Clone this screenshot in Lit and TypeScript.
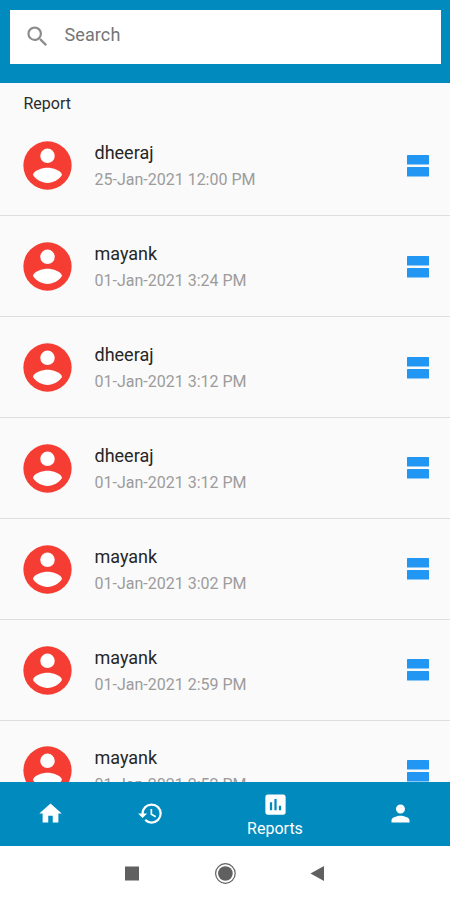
import { LitElement, html, css, svg } from "lit";
import { customElement } from "lit/decorators.js";

interface Report {
  name: string;
  date: string;
}

const REPORTS: Report[] = [
  { name: "dheeraj", date: "25-Jan-2021 12:00 PM" },
  { name: "mayank", date: "01-Jan-2021 3:24 PM" },
  { name: "dheeraj", date: "01-Jan-2021 3:12 PM" },
  { name: "dheeraj", date: "01-Jan-2021 3:12 PM" },
  { name: "mayank", date: "01-Jan-2021 3:02 PM" },
  { name: "mayank", date: "01-Jan-2021 2:59 PM" },
  { name: "mayank", date: "01-Jan-2021 2:52 PM" },
];

const ICONS = {
  search: svg`<path d="M15.5 14h-.79l-.28-.27A6.47 6.47 0 0 0 16 9.5 6.5 6.5 0 1 0 9.5 16c1.61 0 3.09-.59 4.23-1.57l.27.28v.79l5 4.99L20.49 19l-4.99-5zm-6 0C7.01 14 5 11.99 5 9.5S7.01 5 9.5 5 14 7.01 14 9.5 11.99 14 9.5 14z"/>`,
  home: svg`<path d="M10 20v-6h4v6h5v-8h3L12 3 2 12h3v8z"/>`,
  history: svg`<path d="M13 3a9 9 0 0 0-9 9H1l3.89 3.89.07.14L9 12H6c0-3.87 3.13-7 7-7s7 3.13 7 7-3.13 7-7 7c-1.93 0-3.68-.79-4.94-2.06l-1.42 1.42A8.954 8.954 0 0 0 13 21a9 9 0 0 0 0-18zm-1 5v5l4.28 2.54.72-1.21-3.5-2.08V8H12z"/>`,
  chart: svg`<path d="M19 3H5c-1.1 0-2 .9-2 2v14c0 1.1.9 2 2 2h14c1.1 0 2-.9 2-2V5c0-1.1-.9-2-2-2zM9 17H7v-7h2v7zm4 0h-2V7h2v10zm4 0h-2v-4h2v4z"/>`,
  person: svg`<path d="M12 12c2.21 0 4-1.79 4-4s-1.79-4-4-4-4 1.79-4 4 1.79 4 4 4zm0 2c-2.67 0-8 1.34-8 4v2h16v-2c0-2.66-5.33-4-8-4z"/>`,
};

@customElement("report-row")
export class ReportRow extends LitElement {
  static properties = { report: { attribute: false } };
  declare report: Report;

  static styles = css`
    :host {
      display: flex;
      align-items: center;
      box-sizing: border-box;
      flex: none;
      height: 100.85px;
      padding: 1px 21px 0 23px;
      border-bottom: 1.5px solid #dedede;
    }
    .avatar {
      width: 49px;
      height: 49px;
      flex: none;
    }
    .text {
      flex: 1;
      margin-left: 22.5px;
      padding-top: 1px;
    }
    .name {
      font-size: 18px;
      line-height: 24px;
      color: #262626;
    }
    .date {
      margin-top: 4px;
      font-size: 16px;
      line-height: 22px;
      color: #9c9c9c;
    }
    .agenda {
      width: 22px;
      height: 22px;
    }
  `;

  render() {
    return html`
      <svg class="avatar" viewBox="1.85 1.85 20.3 20.3">
        <circle cx="12" cy="12" r="10" fill="#f63d33" />
        <circle cx="12" cy="8" r="3" fill="#fff" />
        <path fill="#fff" d="M12 19.2c-2.5 0-4.71-1.28-6-3.22.03-1.99 4-3.08 6-3.08 1.99 0 5.97 1.09 6 3.08-1.29 1.94-3.5 3.22-6 3.22z" />
      </svg>
      <div class="text">
        <div class="name">${this.report.name}</div>
        <div class="date">${this.report.date}</div>
      </div>
      <svg class="agenda" viewBox="0 0 22 22" fill="#2196f3">
        <rect width="22" height="9.5" rx=".6" />
        <rect y="12" width="22" height="9.5" rx=".6" />
      </svg>
    `;
  }
}

@customElement("app-root")
export class AppRoot extends LitElement {
  static styles = css`
    :host {
      display: flex;
      flex-direction: column;
      width: 450px;
      height: 900px;
      overflow: hidden;
      background: #fafafa;
      font-family: Roboto, sans-serif;
    }
    .header {
      flex: none;
      box-sizing: border-box;
      height: 82.5px;
      padding: 9.5px 9px 0 9.5px;
      background: #008abe;
    }
    .search {
      display: flex;
      align-items: center;
      box-sizing: border-box;
      height: 54.5px;
      padding-left: 14px;
      background: #fff;
      color: #757575;
      font-size: 18px;
    }
    .search svg {
      width: 27px;
      height: 27px;
      fill: #8c8c8c;
    }
    .placeholder {
      margin: -5px 0 0 14px;
      letter-spacing: 0.1px;
    }
    .list {
      flex: 1;
      min-height: 0;
      overflow: hidden;
      display: flex;
      flex-direction: column;
    }
    .title {
      flex: none;
      box-sizing: border-box;
      height: 33px;
      padding: 11px 0 0 23.5px;
      font-size: 16px;
      line-height: 20px;
      color: #2b2b2b;
    }
    .tabs {
      flex: none;
      display: grid;
      grid-template-columns: 100px 100px 150px 100px;
      height: 64px;
      background: #008abe;
      color: #fff;
    }
    .tab {
      display: flex;
      flex-direction: column;
      align-items: center;
      justify-content: center;
      padding-bottom: 2px;
      font-size: 16px;
      line-height: 20px;
    }
    .tab.active {
      gap: 1px;
      padding: 1px 0 0;
    }
    .tab svg {
      width: 27px;
      height: 27px;
      flex: none;
      fill: #fff;
    }
    .system {
      flex: none;
      height: 54px;
      display: grid;
      grid-template-columns: 40px 146px 40px;
      justify-content: center;
      align-items: center;
      justify-items: center;
      background: #fff;
      fill: #606060;
    }
    .system svg {
      width: 24px;
      height: 24px;
    }
  `;

  private icon(name: keyof typeof ICONS) {
    return html`<svg viewBox="0 0 24 24">${ICONS[name]}</svg>`;
  }

  render() {
    return html`
      <header class="header">
        <div class="search">
          ${this.icon("search")}<span class="placeholder">Search</span>
        </div>
      </header>
      <main class="list">
        <div class="title">Report</div>
        ${REPORTS.map((r) => html`<report-row .report=${r}></report-row>`)}
      </main>
      <nav class="tabs">
        <div class="tab">${this.icon("home")}</div>
        <div class="tab">${this.icon("history")}</div>
        <div class="tab active">${this.icon("chart")}<span>Reports</span></div>
        <div class="tab">${this.icon("person")}</div>
      </nav>
      <footer class="system">
        <svg viewBox="0 0 24 24"><rect x="5" y="5.5" width="14" height="14" /></svg>
        <svg viewBox="0 0 24 24">
          <circle cx="12.4" cy="12.5" r="9.8" fill="none" stroke="#606060" stroke-width="1.2" />
          <circle cx="12.4" cy="12.5" r="7.3" />
        </svg>
        <svg viewBox="0 0 24 24"><path d="M4.5 12.5 18 5v15z" /></svg>
      </footer>
    `;
  }
}
